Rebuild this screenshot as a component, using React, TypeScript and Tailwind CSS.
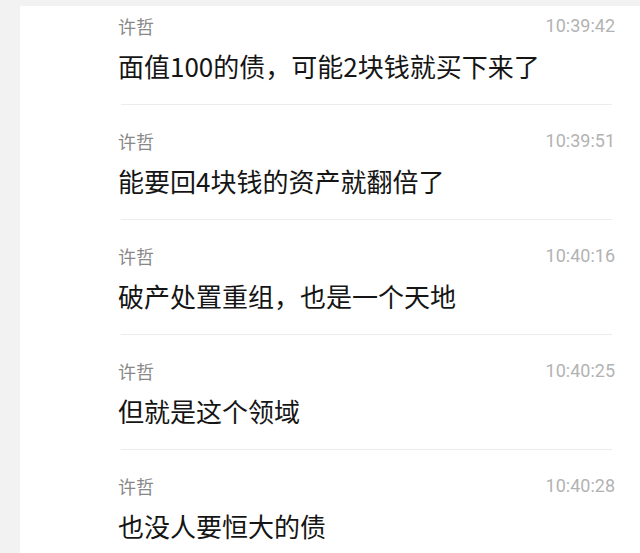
const messages = [
  { name: '许哲', time: '10:39:42', text: '面值100的债，可能2块钱就买下来了' },
  { name: '许哲', time: '10:39:51', text: '能要回4块钱的资产就翻倍了' },
  { name: '许哲', time: '10:40:16', text: '破产处置重组，也是一个天地' },
  { name: '许哲', time: '10:40:25', text: '但就是这个领域' },
  { name: '许哲', time: '10:40:28', text: '也没人要恒大的债' },
];

function MessageRow({ name, time, text, first }: { name: string; time: string; text: string; first: boolean }) {
  return (
    <div>
      {!first && <div className="ml-[101px] mr-[28px] h-px bg-[#ececec]" />}
      <div className={`${first ? 'pt-[8px]' : 'pt-[24px]'} pb-[21px] pl-[98px] pr-[25px]`}>
        <div className="flex items-center justify-between h-[24px]">
          <span className="text-[18px] leading-[24px] text-[#888888]">{name}</span>
          <span className="font-['Roboto',sans-serif] text-[18px] leading-[24px] text-[#b3b3b3]">{time}</span>
        </div>
        <p className="mt-[11px] text-[26px] leading-[34px] text-[#151515]">{text}</p>
      </div>
    </div>
  );
}

export default function App() {
  return (
    <div
      className="w-[640px] h-[553px] overflow-hidden bg-[#f2f2f2] pt-[6px] pl-[20px]"
      style={{ fontFamily: '"Noto Sans CJK SC", "Noto Sans", sans-serif' }}
    >
      <div className="bg-white h-full">
        {messages.map((m, i) => (
          <MessageRow key={m.time} {...m} first={i === 0} />
        ))}
      </div>
    </div>
  );
}
